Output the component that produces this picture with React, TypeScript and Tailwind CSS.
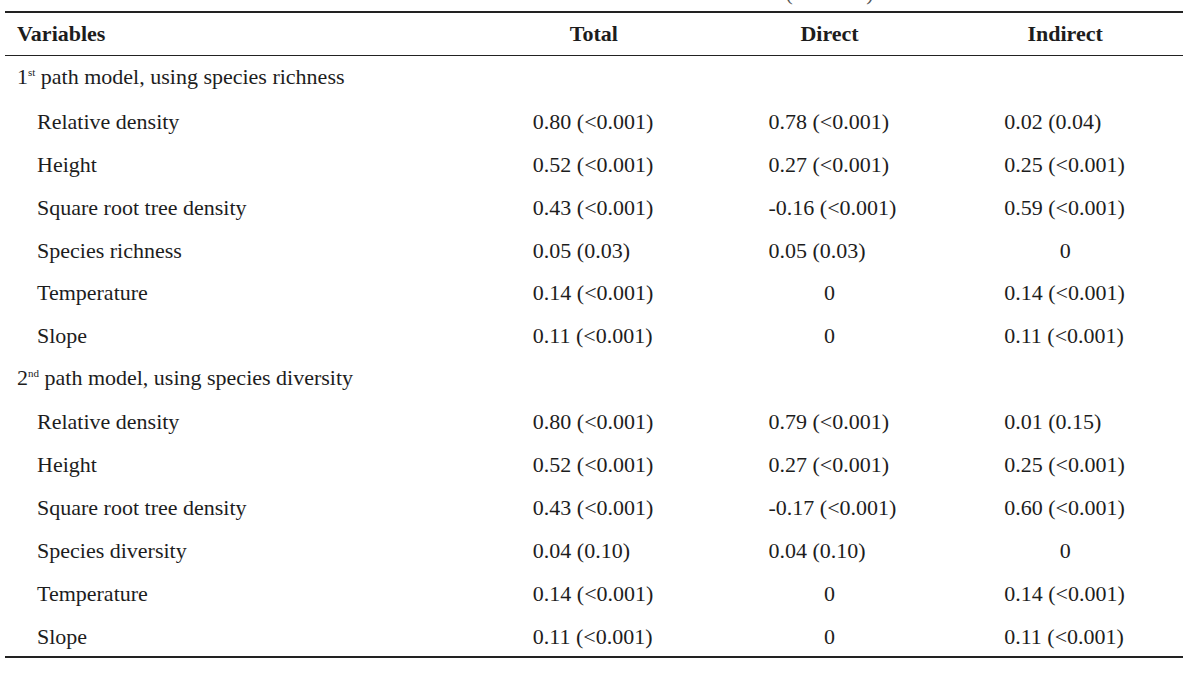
type Row = { label: string; total: string; direct: string; indirect: string };

const model1: Row[] = [
  { label: 'Relative density', total: '0.80 (<0.001)', direct: '0.78 (<0.001)', indirect: '0.02 (0.04)' },
  { label: 'Height', total: '0.52 (<0.001)', direct: '0.27 (<0.001)', indirect: '0.25 (<0.001)' },
  { label: 'Square root tree density', total: '0.43 (<0.001)', direct: '-0.16 (<0.001)', indirect: '0.59 (<0.001)' },
  { label: 'Species richness', total: '0.05 (0.03)', direct: '0.05 (0.03)', indirect: '0' },
  { label: 'Temperature', total: '0.14 (<0.001)', direct: '0', indirect: '0.14 (<0.001)' },
  { label: 'Slope', total: '0.11 (<0.001)', direct: '0', indirect: '0.11 (<0.001)' },
];

const model2: Row[] = [
  { label: 'Relative density', total: '0.80 (<0.001)', direct: '0.79 (<0.001)', indirect: '0.01 (0.15)' },
  { label: 'Height', total: '0.52 (<0.001)', direct: '0.27 (<0.001)', indirect: '0.25 (<0.001)' },
  { label: 'Square root tree density', total: '0.43 (<0.001)', direct: '-0.17 (<0.001)', indirect: '0.60 (<0.001)' },
  { label: 'Species diversity', total: '0.04 (0.10)', direct: '0.04 (0.10)', indirect: '0' },
  { label: 'Temperature', total: '0.14 (<0.001)', direct: '0', indirect: '0.14 (<0.001)' },
  { label: 'Slope', total: '0.11 (<0.001)', direct: '0', indirect: '0.11 (<0.001)' },
];

const rowCls = 'grid h-[42.9px] grid-cols-[471px_1fr_1fr_1fr] items-center pt-[3px]';

// "0" sits centred, real values share one left edge inside the column
function Value({ v }: { v: string }) {
  if (v === '0') return <div className="text-center">0</div>;
  return (
    <div className="flex justify-center">
      <span className="w-[122px] whitespace-nowrap">{v}</span>
    </div>
  );
}

function Section({ ord, sup, label, rows }: { ord: string; sup: string; label: string; rows: Row[] }) {
  return (
    <>
      <div className={rowCls}>
        <div className="whitespace-nowrap pl-[12px]">
          {ord}
          <span className="relative top-[-8px] text-[11px]">{sup}</span> {label}
        </div>
      </div>
      {rows.map((r) => (
        <div key={r.label} className={rowCls}>
          <div className="pl-[32px]">{r.label}</div>
          <Value v={r.total} />
          <Value v={r.direct} />
          <Value v={r.indirect} />
        </div>
      ))}
    </>
  );
}

export default function App() {
  return (
    <div className="h-[674px] w-[1196px] overflow-hidden bg-white text-[22px] leading-[22px] text-[#1d1d1d] [font-family:'Liberation_Serif','Times_New_Roman',serif]">
      <div className="ml-[5px] w-[1178px]">
        {/* tail of the caption line, cut off by the crop */}
        <div className="h-[11px] overflow-hidden">
          <div className="mt-[-18px] grid grid-cols-[471px_1fr_1fr_1fr] text-[#555]">
            <div />
            <div />
            <div className="text-center">(P &lt; 0.05)</div>
          </div>
        </div>
        <div className="h-[1.5px] bg-[#222]" />
        <div className="grid h-[42px] grid-cols-[471px_1fr_1fr_1fr] items-center font-bold">
          <div className="pl-[12px]">Variables</div>
          <div className="text-center">Total</div>
          <div className="text-center">Direct</div>
          <div className="text-center">Indirect</div>
        </div>
        <div className="h-[1.5px] bg-[#222]" />
        <Section ord="1" sup="st" label="path model, using species richness" rows={model1} />
        <Section ord="2" sup="nd" label="path model, using species diversity" rows={model2} />
        <div className="h-[1.5px] bg-[#222]" />
      </div>
    </div>
  );
}
